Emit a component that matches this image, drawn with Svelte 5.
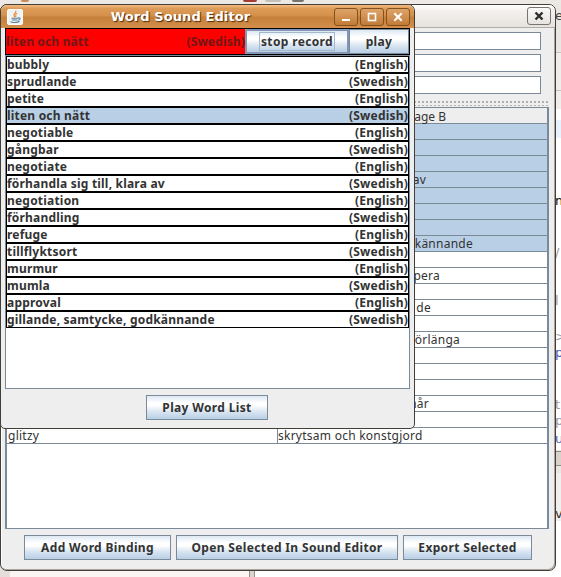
<script>
  const words = [
    'bubbly', 'sprudlande', 'petite', 'liten och nätt',
    'negotiable', 'gångbar', 'negotiate', 'förhandla sig till, klara av',
    'negotiation', 'förhandling', 'refuge', 'tillflyktsort',
    'murmur', 'mumla', 'approval', 'gillande, samtycke, godkännande'
  ];
  const lang = (i) => (i % 2 ? '(Swedish)' : '(English)');
  const selected = 3;

  // Second-column texts and the x at which each one ends, measured from the column's left edge.
  const table = Array.from({ length: 20 }, (_, i) => ({ sel: i < 8, a: '', b: '', end: 0 }));
  const put = (i, b, end, a = '') => Object.assign(table[i], { a, b, end });
  put(3, 'klara av', 148);
  put(7, 'godkännande', 195);
  put(9, 'pera', 162);
  put(11, 'de', 153);
  put(13, 'förlänga', 182);
  put(17, 'når', 151);
  put(19, 'skrytsam och konstgjord', 143, 'glitzy');
</script>

<div class="desktop">
  <div class="topstrip"><i class="b1"></i><i class="b2"></i><i class="b3"></i><i class="b4"></i></div>
  <div class="edge">
    <span style="top:8px;color:#444">e</span>
    <span style="top:193px;color:#111">m</span>
    <span style="top:245px;color:#999">/</span>
    <span style="top:293px;color:#99a">l</span>
    <span style="top:329px;color:#99a">&gt;</span>
    <span style="top:345px;color:#4a5fc0">p</span>
    <span style="top:397px;color:#99a">t</span>
    <span style="top:413px;color:#99a">p</span>
    <span style="top:431px;color:#4a5fc0">u</span>
    <span style="top:506px;color:#333">v</span>
    <i class="tool"></i><i class="sel"></i><i class="bar"></i>
  </div>
  <div class="bottom"><i></i></div>

  <section class="win back">
    <header><button class="close" aria-label="Close"><svg width="10" height="10" viewBox="0 0 10 10"><path d="M1.5 1.5L8.5 8.5M8.5 1.5L1.5 8.5" stroke="#2d2d2a" stroke-width="2.4" /></svg></button></header>
    <div class="body">
      <div class="fields"><div></div><div></div><div></div></div>
      <div class="divider"></div>
      <div class="tablebox">
        <div class="thead"><div></div><div>Language B</div></div>
        {#each table as r}
          <div class="tr" class:on={r.sel}>
            <div>{r.a}</div>
            <div><span style="width:{r.end}px">{r.b}</span></div>
          </div>
        {/each}
      </div>
      <footer>
        <button style="width:147px">Add Word Binding</button>
        <button style="width:222px">Open Selected In Sound Editor</button>
        <button style="width:129px">Export Selected</button>
      </footer>
    </div>
  </section>

  <section class="win front">
    <header>
      <svg class="java" width="16" height="16" viewBox="0 0 16 16">
        <rect x=".5" y=".5" width="15" height="15" rx="1.5" fill="#f1f3f3" stroke="#fff" />
        <path d="M8.8 1.5C10 4 4.5 4.8 8 8.3M10.2 4.2C7.2 5.2 9.6 6 8.6 8" fill="none" stroke="#e58b3c" stroke-width="1.1" />
        <path d="M4.5 9.2h6.5M5 11h5.3M11 9c3-.7 2.5 2 0 2.3M3.5 12.5c1 1.3 7 1.3 9-.2" fill="none" stroke="#517c9d" stroke-width="1.1" />
      </svg>
      <h1>Word Sound Editor</h1>
      <div class="ctl">
        <button aria-label="Minimize"><svg width="12" height="12"><path d="M2 9h8" stroke="#fff" stroke-width="2" /></svg></button>
        <button aria-label="Maximize"><svg width="12" height="12"><rect x="2.5" y="2.5" width="7" height="7" fill="none" stroke="#fff" stroke-width="1.6" /></svg></button>
        <button aria-label="Close"><svg width="12" height="12"><path d="M2.3 2.3l7.4 7.4M9.7 2.3L2.3 9.7" stroke="#fff" stroke-width="2" /></svg></button>
      </div>
    </header>
    <div class="body">
      <div class="record">
        <div class="rec"><span>liten och nätt</span><span>(Swedish)</span></div>
        <button class="stop"><span>stop record</span></button>
        <button class="play">play</button>
      </div>
      <div class="list">
        {#each words as w, i}
          <div class="row" class:on={i === selected}><span>{w}</span><span>{lang(i)}</span></div>
        {/each}
      </div>
      <div class="foot"><button>Play Word List</button></div>
    </div>
  </section>
</div>

<style>
  :global(body) { margin: 0; }
  * { box-sizing: border-box; }
  .desktop { position: relative; width: 561px; height: 577px; overflow: hidden; background: #fff; font: 12px/15px "Noto Sans", "Open Sans", sans-serif; color: #333; }
  button { font: bold 12px/15px "Noto Sans", "Open Sans", sans-serif; letter-spacing: .35px; color: #333; padding: 0; margin: 0; white-space: nowrap; border: 1px solid #7a8a99; border-radius: 0; background: linear-gradient(#dde8f3 0%, #fff 30%, #fff 42%, #dce7f2 65%, #b8cfe5 100%); }
  .topstrip { position: absolute; left: 0; top: 0; width: 561px; height: 12px; background: #ece8e3; }
  .topstrip i { position: absolute; top: 0; height: 2px; border-radius: 0 0 5px 5px; }
  .b1 { left: 21px; width: 8px; background: #c98b56; }
  .b2 { left: 243px; width: 14px; background: #a33d31; }
  .b3 { left: 265px; width: 16px; background: #c3c0bb; }
  .b4 { left: 292px; width: 12px; background: #77736f; }
  .edge { position: absolute; left: 555px; top: 4px; width: 6px; height: 573px; overflow: hidden; background: linear-gradient(#eae7e3 0 48px, #f0eeea 48px 105px, #fff 105px 446px, #eae6e1 446px 469px, #f1efeb 469px 517px, #fff 517px); }
  .edge span { position: absolute; left: 0; font: 13px/16px "DejaVu Sans", sans-serif; margin-top: -4px; }
  .edge i { position: absolute; left: 0; width: 6px; }
  .edge .tool { top: 48px; height: 39px; border: 1px solid #c7c2bb; border-width: 1px 0; }
  .edge .sel { top: 116px; height: 18px; background: #e8f2fe; }
  .edge .bar { top: 447px; height: 15px; background: #d8d2ca; border: 1px solid #8e8a84; border-width: 1px 0; }
  .bottom { position: absolute; left: 0; top: 560px; width: 561px; height: 17px; background: linear-gradient(90deg, #e5deda 0 10px, #faf4f2 10px 249px, #d9d4ce 249px 255px, #fff 255px); }
  .bottom i { position: absolute; left: 249px; top: 0; width: 6px; height: 17px; border: 1px solid #9b8b80; border-width: 0 1px; }

  .win { position: absolute; left: 0; display: flex; flex-direction: column; border: 1px solid #443e39; background: #eee; overflow: hidden; }
  .win header { flex: none; display: flex; align-items: center; }

  .back { top: 4px; width: 556px; height: 567px; border-radius: 7px; box-shadow: inset -1px -1px #aaa49c, inset 1px 1px #fff; }
  .back header { height: 23px; justify-content: flex-end; padding-right: 4px; background: linear-gradient(#fff, #f3f0ed 30%, #e6e2dd); border-bottom: 1px solid #b3ada5; }
  .close { width: 24px; height: 18px; display: grid; place-items: center; border: 1px solid #77736e; border-radius: 3px; background: linear-gradient(#faf9f8, #e6e3df); }
  .back .body { flex: 1; display: flex; flex-direction: column; padding: 0 6px 0 4px; }
  .fields { display: flex; flex-direction: column; gap: 4px; padding: 4px 8px 0 0; }
  .fields div { height: 18px; border: 1px solid #7a8a99; background: #fff; }
  .divider { height: 6px; margin-top: 6px; background: radial-gradient(circle, #888 .65px, transparent .8px) 0 0 / 4px 4px; }
  .tablebox { height: 422px; margin-top: 1px; border: 1px solid #7a8a99; border-width: 1px 2px 1px 2px; background: #fff; }
  .thead, .tr { display: grid; grid-template-columns: 271px 1fr; border-bottom: 1px solid #7a8a99; white-space: nowrap; }
  .thead { height: 16px; background: #eee; text-align: center; line-height: 16px; }
  .thead div:last-child { line-height: 17px; }
  .tr { height: 16px; font-size: 12px; line-height: 15px; letter-spacing: .25px; }
  .tr > div:first-child { border-right: 1px solid #7a8a99; padding-left: 1px; }
  .tr span { display: block; text-align: right; }
  .on { background: #b8cfe5; }
  footer { display: flex; gap: 5px; margin: 6px 0 0 19px; }
  footer button { height: 25px; }

  .front { top: 4px; width: 415px; height: 425px; border-radius: 7px 7px 5px 5px; border-color: #443e39; }
  .front header { height: 23px; padding: 0 4px 0 6px; background: linear-gradient(#f2bd83 0, #dd9c58 15%, #d4914c 45%, #c5803a 55%, #d38f4b 100%); }
  .java { flex: none; }
  h1 { flex: 1; margin: 0 0 0 4px; text-align: center; font: bold 13px/18px "DejaVu Sans", sans-serif; letter-spacing: .1px; color: #fff; text-shadow: 1px 1px 1px #4a2c10; white-space: nowrap; }
  .ctl { display: flex; gap: 2px; }
  .ctl button { width: 24px; height: 18px; display: grid; place-items: center; border: 1px solid #85501f; border-radius: 3px; background: linear-gradient(#dfa368, #c17c37); }
  .front .body { flex: 1; padding: 0 4px 0 4px; display: flex; flex-direction: column; }
  .record { display: flex; height: 27px; border: 1px solid #000; font-weight: bold; }
  .rec { flex: 1; display: flex; justify-content: space-between; align-items: center; background: red; color: #701818; white-space: nowrap; letter-spacing: .15px; }
  .stop { width: 104px; border: 2px solid #8496b5; }
  .stop span { outline: 1px solid #a3b8cc; padding: 0 1px; }
  .play { width: 60px; border-width: 1px; }
  .list { height: 334px; background: #fff; border: 1px solid #7a8a99; }
  .row { height: 17px; display: flex; justify-content: space-between; border: 1px solid #000; font-weight: bold; line-height: 15px; letter-spacing: .2px; white-space: nowrap; }
  .foot { display: flex; justify-content: center; padding: 6px 1px 0 0; }
  .foot button { width: 122px; height: 25px; }
</style>
